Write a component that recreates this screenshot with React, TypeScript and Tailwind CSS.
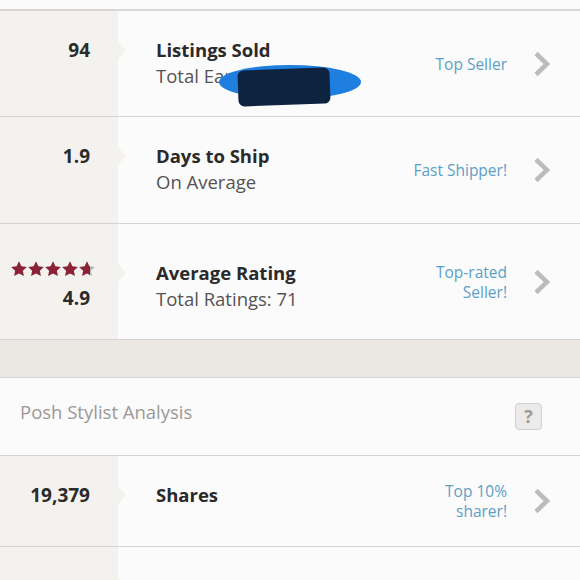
import React from 'react';

const FONT = { fontFamily: '"Open Sans", Lato, Arial, sans-serif' };

function Star({ fill = 1 }: { fill?: number }) {
  const id = `s${Math.round(fill * 100)}`;
  return (
    <svg width="16" height="16" viewBox="0 0 24 23" className="block">
      <defs>
        <linearGradient id={id} x1="0" x2="1" y1="0" y2="0">
          <stop offset={fill} stopColor="#8a2335" />
          <stop offset={fill} stopColor="#b9b3b3" />
        </linearGradient>
      </defs>
      <path
        d="M12 0l3.6 7.4 8.2 1-6 5.6 1.6 8.1L12 18.2l-7.4 3.9 1.6-8.1-6-5.6 8.2-1z"
        fill={`url(#${id})`}
      />
    </svg>
  );
}

function Chevron() {
  return (
    <svg width="18" height="26" viewBox="0 0 18 26" className="block">
      <path d="M3 2.5 L14 13 L3 23.5" fill="none" stroke="#bcbcbc" strokeWidth="4.5" />
    </svg>
  );
}

interface RowProps {
  left: React.ReactNode;
  title: string;
  subtitle?: string;
  badge: React.ReactNode;
  height: string;
  pad: string;
  notch: string;
}

function StatRow({ left, title, subtitle, badge, height, pad, notch }: RowProps) {
  return (
    <div className={`flex border-b border-[#d6d4d2] ${height}`}>
      {/* Left value column with little pointer */}
      <div className={`relative w-[118px] shrink-0 bg-[#f4f2ef] flex flex-col items-end pr-[28px] ${pad}`}>
        {left}
        <span
          className={`absolute left-[118px] ${notch} w-0 h-0 border-y-[9px] border-y-transparent border-l-[8px] border-l-[#f4f2ef]`}
        ></span>
      </div>

      {/* Title */}
      <div className={`flex-1 pl-[38px] ${pad}`}>
        <div className="text-[18.5px] leading-[26px] font-bold text-[#2a2a2a]">{title}</div>
        {subtitle && <div className="text-[18.5px] leading-[25px] text-[#555353]">{subtitle}</div>}
      </div>

      {/* Badge + chevron */}
      <div className="flex items-center pr-[29px]">
        <div className="text-right text-[15.5px] leading-[20px] text-[#5b9fc6]">{badge}</div>
        <div className="ml-[26px]">
          <Chevron />
        </div>
      </div>
    </div>
  );
}

const num = 'text-[19px] leading-[26px] font-bold text-[#2a2a2a]';

export default function App() {
  return (
    <main className="w-[580px] h-[580px] overflow-hidden bg-[#fcfbfb]" style={FONT}>
      <div className="h-[11px] border-b-2 border-[#d9d7d5]"></div>

      <StatRow
        height="h-[106px]"
        pad="pt-[26px]"
        notch="top-[30px]"
        left={<span className={num}>94</span>}
        title="Listings Sold"
        subtitle="Total Earnings"
        badge="Top Seller"
      />

      {/* redaction scribble */}
      <div className="relative h-0">
        <div className="absolute left-[219px] top-[-52px] w-[142px] h-[34px] rounded-[50%] bg-[#1e7fe0]"></div>
        <div className="absolute left-[238px] top-[-48px] w-[92px] h-[36px] rounded-[6px] bg-[#0d2340] -rotate-2"></div>
      </div>

      <StatRow
        height="h-[107px]"
        pad="pt-[26px]"
        notch="top-[30px]"
        left={<span className={num}>1.9</span>}
        title="Days to Ship"
        subtitle="On Average"
        badge="Fast Shipper!"
      />

      <StatRow
        height="h-[116px]"
        pad="pt-[36px]"
        notch="top-[40px]"
        left={
          <>
            <div className="flex gap-[1px] -mr-[5px] mt-[1px]">
              <Star />
              <Star />
              <Star />
              <Star />
              <Star fill={0.72} />
            </div>
            <span className={`${num} mt-[8px]`}>4.9</span>
          </>
        }
        title="Average Rating"
        subtitle="Total Ratings: 71"
        badge={
          <>
            Top-rated
            <br />
            Seller!
          </>
        }
      />

      {/* textured divider */}
      <div className="h-[38px] bg-[#ebe8e4] border-b border-[#d6d4d2]"></div>

      {/* Posh Stylist Analysis header */}
      <div className="h-[78px] flex items-center justify-between pl-[20px] pr-[38px] border-b border-[#d6d4d2]">
        <span className="text-[18.5px] text-[#9b9896] -mt-[10px]">Posh Stylist Analysis</span>
        <span className="w-[27px] h-[27px] rounded-[4px] border border-[#d2d0ce] bg-[#ecebe9] flex items-center justify-center text-[18px] font-bold text-[#9d9b99]">
          ?
        </span>
      </div>

      <StatRow
        height="h-[91px]"
        pad="pt-[26px]"
        notch="top-[30px]"
        left={<span className={num}>19,379</span>}
        title="Shares"
        badge={
          <>
            Top 10%
            <br />
            sharer!
          </>
        }
      />

      <StatRow height="h-[91px]" pad="pt-[26px]" notch="top-[30px]" left={null} title="" badge="" />
    </main>
  );
}
